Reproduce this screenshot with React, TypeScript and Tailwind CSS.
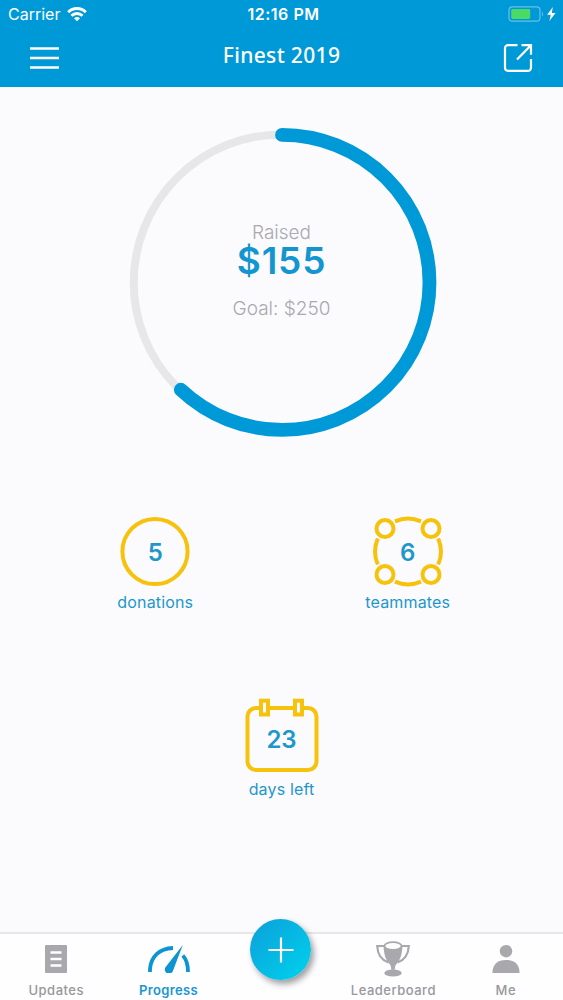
import type { ReactNode } from "react";

const RADIUS = 147.5;
const CIRCUMFERENCE = 2 * Math.PI * RADIUS;

function StatusBar() {
  return (
    <div className="grid h-7 grid-cols-3 items-center pl-[8px] pr-[6px] text-[16px] leading-7 text-white">
      <div className="flex items-center gap-[7px]">
        <span>Carrier</span>
        <svg width="20" height="15" viewBox="0 0 20 15" fill="none" stroke="#fff" strokeWidth="2.9">
          <path d="M1.2 5.2a12.4 12.4 0 0 1 17.6 0" />
          <path d="M4.5 8.8a7.8 7.8 0 0 1 11 0" />
          <path d="M10 14.2 7 11.3a4.2 4.2 0 0 1 6 0z" fill="#fff" stroke="none" />
        </svg>
      </div>
      <span className="whitespace-nowrap pl-[2px] text-center font-semibold tracking-[0.5px]">12:16 PM</span>
      <div className="flex items-center justify-end">
        <svg width="50" height="16" viewBox="0 0 50 16" fill="none">
          <rect x="2" y="0.8" width="31" height="14.4" rx="3.5" stroke="#68c0e8" strokeWidth="1.2" />
          <rect x="4.2" y="3" width="19" height="10" rx="1.4" fill="#4cd964" />
          <path d="M35 5.7v4.6c1.5-.8 1.5-3.8 0-4.6z" fill="#68c0e8" />
          <path d="M45.8 1 40.2 8.8h3.5l-1.3 6.2L48.5 7h-3.7z" fill="#fff" />
        </svg>
      </div>
    </div>
  );
}

function NavBar() {
  return (
    <div className="flex h-[59px] items-center justify-between pl-[30px] pr-[30px] text-white">
      <svg width="30" height="24" viewBox="0 0 30 24" stroke="#fff" strokeWidth="2.4">
        <path d="M0 2.5h29M0 12h29M0 21.5h29" />
      </svg>
      <h1 className="pb-[3px] font-['Noto_Sans','Open_Sans',sans-serif] text-[21px] font-medium tracking-[0.35px]">
        Finest 2019
      </h1>
      <svg width="30" height="30" viewBox="0 0 30 30" fill="none" stroke="#fff" strokeWidth="2.2">
        <path d="M14.5 2.2H5a3 3 0 0 0-3 3v19.6a3 3 0 0 0 3 3h20a3 3 0 0 0 3-3V16" />
        <path d="M18.5 2.2H28v9.5M28 2.2 14 16.5" />
      </svg>
    </div>
  );
}

function ProgressRing({ raised, goal }: { raised: number; goal: number }) {
  return (
    <div className="relative h-[310px] w-[310px]">
      <svg width="310" height="310" viewBox="0 0 310 310" fill="none">
        <circle cx="154.7" cy="155.4" r="148" stroke="#e7e6e9" strokeWidth="8" />
        <circle
          cx="155"
          cy="155.4"
          r={RADIUS}
          stroke="#0099d8"
          strokeWidth="13.8"
          strokeLinecap="round"
          strokeDasharray={`${(CIRCUMFERENCE * raised) / goal} ${CIRCUMFERENCE}`}
          transform="rotate(-90 155 155.4)"
        />
      </svg>
      <div className="absolute inset-0 flex flex-col items-center pt-[95px] text-[19px] leading-[22px] text-[#a9a9ae]">
        <span className="font-light">Raised</span>
        <span className="h-[38px] text-[37px] font-semibold leading-[34px] tracking-[0.8px] text-[#1396cf]">
          ${raised}
        </span>
        <span className="mt-[16px] font-light">Goal: ${goal}</span>
      </div>
    </div>
  );
}

function Stat({ value, label, children }: { value: number; label: string; children: ReactNode }) {
  return (
    <div className="flex flex-col items-center text-[#1e97cb]">
      <div className="grid h-[76px] w-[76px] place-items-center">
        <div className="col-start-1 row-start-1">{children}</div>
        <span className="col-start-1 row-start-1 pt-[2px] text-[24px] font-semibold leading-6">{value}</span>
      </div>
      <span className="mt-[2px] text-[16px] leading-5 tracking-[0.15px]">{label}</span>
    </div>
  );
}

function DonationsIcon() {
  return (
    <svg width="76" height="76" viewBox="0 0 76 76" fill="none" stroke="#f7c20c" strokeWidth="4">
      <circle cx="38" cy="37.5" r="32.6" />
    </svg>
  );
}

function TeammatesIcon() {
  return (
    <svg width="76" height="76" viewBox="0 0.5 76 76" fill="none" stroke="#f7c20c" strokeWidth="4">
      <path d="M25 7.8a33 33 0 0 1 26 0M68.2 25a33 33 0 0 1 0 26M51 68.2a33 33 0 0 1-26 0M7.8 51a33 33 0 0 1 0-26" />
      <circle cx="15" cy="15" r="8.5" />
      <circle cx="61" cy="15" r="8.5" />
      <circle cx="15" cy="61" r="8.5" />
      <circle cx="61" cy="61" r="8.5" />
    </svg>
  );
}

function CalendarIcon() {
  return (
    <svg
      width="76"
      height="76"
      viewBox="0 0 76 76"
      fill="none"
      stroke="#f7c20c"
      strokeWidth="4"
      className="overflow-visible"
    >
      <path d="M17 7h-5a8.5 8.5 0 0 0-8.5 8.5v45A8.5 8.5 0 0 0 12 69h52a8.5 8.5 0 0 0 8.5-8.5v-45A8.5 8.5 0 0 0 64 7h-5M25 7h26" />
      <rect x="17" y="-.3" width="7" height="13.8" />
      <rect x="51" y="-.3" width="7" height="13.8" />
    </svg>
  );
}

function UpdatesIcon() {
  return (
    <svg width="22" height="28" viewBox="0 0 22 28">
      <rect width="22" height="28" rx="1" fill="#a9a9ad" />
      <path d="M5.5 7.5h11M5.5 14h11M5.5 20.5h11" stroke="#fff" strokeWidth="2.6" />
    </svg>
  );
}

function GaugeIcon() {
  return (
    <svg width="42" height="28" viewBox="0 0 42 28" fill="none" stroke="#0d95d2" strokeWidth="3.8">
      <path d="M2 27v-3C3 12 11 3.5 25 3" />
      <path d="M34.8 10.5C38.5 14.5 40 19.5 40 27" />
      <path d="M34.8 0 17.3 22.5a4.2 4.2 0 0 0 7.4 4z" fill="#0d95d2" stroke="none" />
    </svg>
  );
}

function TrophyIcon() {
  return (
    <svg width="36" height="36" viewBox="0 0 36 36" fill="none">
      <path
        d="M9 5H2.2C2.6 13 6 19 13.5 21.5M27 5h6.8C33.4 13 30 19 22.5 21.5"
        stroke="#a9a9ad"
        strokeWidth="2.2"
      />
      <path
        d="M8.5 4.8c.5 9 2.2 13.7 5.2 17.2 2 2.3 2.5 3.3 2.5 6.7h3.6c0-3.4.5-4.4 2.5-6.7 3-3.5 4.7-8.2 5.2-17.2z"
        fill="#a9a9ad"
      />
      <ellipse cx="18" cy="5" rx="8.5" ry="3.9" fill="#fff" stroke="#a9a9ad" strokeWidth="1.8" />
      <ellipse cx="18" cy="32" rx="8.7" ry="3.6" fill="#a9a9ad" />
    </svg>
  );
}

function PersonIcon() {
  return (
    <svg width="28" height="28" viewBox="0 0 28 28" fill="#a9a9ad">
      <circle cx="14" cy="6.2" r="6.2" />
      <path d="M.4 28c0-8.5 5-13 13.6-13s13.6 4.5 13.6 13z" />
    </svg>
  );
}

function Tab({ label, active, children }: { label: string; active?: boolean; children: ReactNode }) {
  return (
    <div className={`flex flex-col items-center ${active ? "text-[#1597d0]" : "text-[#98989c]"}`}>
      <div className="flex h-[49px] items-center justify-center">{children}</div>
      <span
        className={`text-[13px] leading-[14px] ${
          active ? "font-semibold tracking-[0.35px]" : "font-medium tracking-[0.5px]"
        }`}
      >
        {label}
      </span>
    </div>
  );
}

export default function App() {
  return (
    <div className="flex h-[1000px] w-[563px] flex-col overflow-hidden bg-[#fbfafd] font-['Inter','Liberation_Sans',sans-serif]">
      <header className="bg-[#0099d8]">
        <StatusBar />
        <NavBar />
      </header>

      <main className="flex flex-1 flex-col items-center pt-[40px]">
        <ProgressRing raised={155} goal={250} />
        <div className="mt-[76.5px] grid w-[505px] grid-cols-2">
          <Stat value={5} label="donations">
            <DonationsIcon />
          </Stat>
          <Stat value={6} label="teammates">
            <TeammatesIcon />
          </Stat>
        </div>
        <div className="mt-[89.5px]">
          <Stat value={23} label="days left">
            <CalendarIcon />
          </Stat>
        </div>
      </main>

      <footer className="grid h-[68px] grid-cols-5 border-t-2 border-[#e7e6e9] bg-[#fefdff] pr-px">
        <Tab label="Updates">
          <UpdatesIcon />
        </Tab>
        <Tab label="Progress" active>
          <GaugeIcon />
        </Tab>
        <div className="-mt-[15px] flex justify-center">
          <button className="flex h-[61px] w-[61px] items-center justify-center rounded-full bg-linear-to-br from-[#0d9fd9] to-[#00d3ee] shadow-[3px_4px_6px_rgba(0,0,0,0.38)]">
            <svg width="26" height="26" viewBox="0 0 26 26" stroke="#fff" strokeWidth="2.2">
              <path d="M13 .5v25M.5 13h25" />
            </svg>
          </button>
        </div>
        <Tab label="Leaderboard">
          <TrophyIcon />
        </Tab>
        <Tab label="Me">
          <PersonIcon />
        </Tab>
      </footer>
    </div>
  );
}
